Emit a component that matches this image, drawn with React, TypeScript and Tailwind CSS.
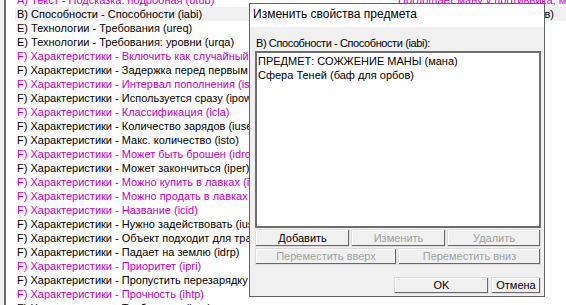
import React from "react";

type Row = { name: string; magenta: boolean; value?: string; selected?: boolean };

const rows: Row[] = [
  { name: "A) Текст - Подсказка: подробная (utub)", magenta: true, value: "Поглощает ману у противника, можно ..." },
  { name: "B) Способности - Способности (iabi)", magenta: false, value: "Сфера Теней (баф для орбов)", selected: true },
  { name: "E) Технологии - Требования (ureq)", magenta: false },
  { name: "E) Технологии - Требования: уровни (urqa)", magenta: false },
  { name: "F) Характеристики - Включить как случайный предмет (iprn)", magenta: true },
  { name: "F) Характеристики - Задержка перед первым использованием", magenta: false },
  { name: "F) Характеристики - Интервал пополнения (istr)", magenta: true },
  { name: "F) Характеристики - Используется сразу (ipow)", magenta: false },
  { name: "F) Характеристики - Классификация (icla)", magenta: true },
  { name: "F) Характеристики - Количество зарядов (iuse)", magenta: false },
  { name: "F) Характеристики - Макс. количество (isto)", magenta: false },
  { name: "F) Характеристики - Может быть брошен (idro)", magenta: true },
  { name: "F) Характеристики - Может закончиться (iper)", magenta: false },
  { name: "F) Характеристики - Можно купить в лавках (isel)", magenta: true },
  { name: "F) Характеристики - Можно продать в лавках (ipaw)", magenta: true },
  { name: "F) Характеристики - Название (icid)", magenta: true },
  { name: "F) Характеристики - Нужно задействовать (iusa)", magenta: false },
  { name: "F) Характеристики - Объект подходит для трансформации", magenta: false },
  { name: "F) Характеристики - Падает на землю (idrp)", magenta: false },
  { name: "F) Характеристики - Приоритет (ipri)", magenta: true },
  { name: "F) Характеристики - Пропустить перезарядку (iicd)", magenta: false },
  { name: "F) Характеристики - Прочность (ihtp)", magenta: true },
  { name: "F) Характеристики - Требования (ireq)", magenta: false },
];

function Btn({ children, disabled, className }: { children: React.ReactNode; disabled?: boolean; className?: string }) {
  return (
    <div
      className={
        "flex items-center justify-center bg-[#f0f0f0] border border-[#dcdcdc] shadow-[inset_-1px_-1px_0_#696969,inset_1px_1px_0_#ffffff] " +
        (disabled ? "text-[#a0a0a0] " : "text-black ") +
        (className ?? "")
      }
    >
      {children}
    </div>
  );
}

export default function App() {
  return (
    <div className="relative w-[566px] h-[305px] overflow-hidden bg-[#f0f0f0] font-['Liberation_Sans',Arial,sans-serif] text-[11px]">
      {/* Main list */}
      <div className="ml-[4px] h-full border-l-2 border-[#6a6a6a] bg-white overflow-hidden">
        <div className="-mt-[7px] flex flex-col">
          {rows.map((r, i) => (
            <div
              key={i}
              className={
                "ml-[9px] h-[14px] leading-[14px] flex whitespace-nowrap " +
                (r.selected ? "bg-[#f0f0f0] " : "") +
                (r.magenta ? "text-[#c000c0]" : "text-black")
              }
            >
              <div className="w-[381px] shrink-0 overflow-hidden pl-[2px]">{r.name}</div>
              <div className="pl-[2px]">{r.value ?? ""}</div>
            </div>
          ))}
        </div>
      </div>

      {/* Dialog window */}
      <div className="absolute left-[249px] top-[3px] w-[296px] h-[294px] border border-[#646464] bg-[#f0f0f0] flex flex-col">
        <div className="h-[23px] shrink-0 bg-white pl-[3px] pb-[3px] flex items-center text-[12px] text-black">
          Изменить свойства предмета
        </div>
        <div className="flex flex-col pl-[5px] pr-[3px] pt-[9px]">
          <div className="h-[14px] leading-[14px] text-black pl-[1px] tracking-[-0.4px] whitespace-nowrap">
            B) Способности - Способности (iabi):
          </div>
          <div className="mt-[1px] h-[177px] border-2 border-[#6e6e6e] bg-white pl-[1px] pt-[1px] text-black leading-[14px]">
            <div>ПРЕДМЕТ: СОЖЖЕНИЕ МАНЫ (мана)</div>
            <div>Сфера Теней (баф для орбов)</div>
          </div>
          <div className="mt-[1px] flex gap-[1px] h-[18px]">
            <Btn className="w-[95px]">Добавить</Btn>
            <Btn className="w-[95px]" disabled>Изменить</Btn>
            <Btn className="flex-1" disabled>Удалить</Btn>
          </div>
          <div className="mt-[1px] flex gap-[1px] h-[17px]">
            <Btn className="w-[142px]" disabled>Переместить вверх</Btn>
            <Btn className="flex-1" disabled>Переместить вниз</Btn>
          </div>
          <div className="mt-[12px] flex justify-end gap-[2px] h-[17px]">
            <Btn className="w-[95px]">OK</Btn>
            <Btn className="w-[50px]">Отмена</Btn>
          </div>
        </div>
      </div>
    </div>
  );
}
